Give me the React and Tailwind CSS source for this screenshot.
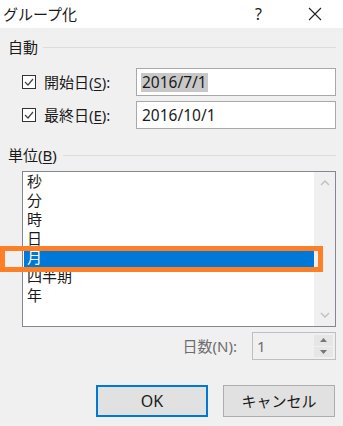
import React from "react";

const FONT = { fontFamily: '"Noto Sans", "Noto Sans CJK JP", sans-serif' };

function Check() {
  return (
    <div className="w-[14px] h-[14px] border border-[#333333] bg-white flex items-center justify-center">
      <svg width="10" height="8" viewBox="0 0 10 8">
        <path d="M1 4 L4 7 L9 1" stroke="#444" strokeWidth="1.2" fill="none" />
      </svg>
    </div>
  );
}

function GroupHeader({ children, lineLeft }) {
  return (
    <div className="h-[20px] flex items-center">
      <span className="pl-[8px] text-[15px] leading-none text-[#1a1a1a]">{children}</span>
      <div className={`${lineLeft} flex-1 mr-[7px] h-px bg-[#dcdcdc]`} />
    </div>
  );
}

const units = ["秒", "分", "時", "日", "月", "四半期", "年"];

export default function App() {
  return (
    <div className="relative w-[343px] h-[426px] overflow-hidden bg-[#f0f0f0] text-[#1a1a1a]" style={FONT}>
      {/* Title bar */}
      <div className="h-[28px] bg-white flex items-center">
        <span className="pl-[3px] text-[15px] leading-none">グループ化</span>
        <span className="ml-auto mr-[46px] text-[16px] leading-none">?</span>
        <svg width="14" height="14" viewBox="0 0 14 14" className="mr-[21px]">
          <path d="M1 1 L13 13 M13 1 L1 13" stroke="#222" strokeWidth="1.1" />
        </svg>
      </div>

      <div className="mt-[9px]">
        <GroupHeader lineLeft="ml-[5px]">自動</GroupHeader>
      </div>

      {/* Start date */}
      <div className="mt-[11px] h-[28px] flex items-center">
        <div className="ml-[22px]"><Check /></div>
        <span className="ml-[8px] w-[92px] text-[15px] leading-none">
          開始日(<span className="underline underline-offset-2">S</span>):
        </span>
        <div className="w-[200px] h-[28px] border border-[#a8a8a8] bg-white flex items-center pl-[4px]">
          <span className="bg-[#c8c8c8] text-[15.5px] leading-[19px] px-px">2016/7/1</span>
        </div>
      </div>

      {/* End date */}
      <div className="mt-[5px] h-[28px] flex items-center">
        <div className="ml-[22px]"><Check /></div>
        <span className="ml-[8px] w-[92px] text-[15px] leading-none">
          最終日(<span className="underline underline-offset-2">E</span>):
        </span>
        <div className="w-[200px] h-[28px] border border-[#a8a8a8] bg-white flex items-center pl-[5px]">
          <span className="text-[15.5px] leading-[19px]">2016/10/1</span>
        </div>
      </div>

      <div className="mt-[16px]">
        <GroupHeader lineLeft="ml-[6px]">
          単位(<span className="underline underline-offset-2">B</span>)
        </GroupHeader>
      </div>

      {/* Listbox */}
      <div className="mt-[6px] ml-[22px] w-[314px] h-[156px] border border-[#828790] bg-white flex">
        <div className="flex-1 pl-px">
          {units.map((u) => (
            <div
              key={u}
              className={`h-[19px] flex items-center pl-[3px] text-[15px] leading-none ${
                u === "月" ? "bg-[#0078d7] text-white" : ""
              }`}
            >
              {u}
            </div>
          ))}
        </div>
        <div className="w-[21px] bg-[#f0f0f0] flex flex-col items-center justify-between py-[8px]">
          <svg width="10" height="6" viewBox="0 0 10 6">
            <path d="M1 5 L5 1 L9 5" stroke="#c2c2c2" strokeWidth="1.5" fill="none" />
          </svg>
          <svg width="10" height="6" viewBox="0 0 10 6">
            <path d="M1 1 L5 5 L9 1" stroke="#c2c2c2" strokeWidth="1.5" fill="none" />
          </svg>
        </div>
      </div>

      {/* Days spin */}
      <div className="mt-[5px] h-[28px] flex items-center justify-end pr-[7px]">
        <span className="mr-[15px] text-[15px] leading-none text-[#6d6d6d]">日数(N):</span>
        <div className="w-[84px] h-[28px] border border-[#bfbfbf] bg-[#f0f0f0] flex p-[2px]">
          <div className="flex-1 flex items-center pl-[2px] text-[15px] leading-none text-[#6d6d6d]">1</div>
          <div className="w-[19px] flex flex-col gap-px">
            <div className="flex-1 bg-[#e6e6e6] flex items-center justify-center">
              <svg width="7" height="4" viewBox="0 0 7 4"><path d="M0 4 L3.5 0 L7 4 Z" fill="#777" /></svg>
            </div>
            <div className="flex-1 bg-[#e6e6e6] flex items-center justify-center">
              <svg width="7" height="4" viewBox="0 0 7 4"><path d="M0 0 L3.5 4 L7 0 Z" fill="#777" /></svg>
            </div>
          </div>
        </div>
      </div>

      {/* Buttons */}
      <div className="mt-[25px] flex justify-end gap-[15px] pr-[8px]">
        <button className="w-[112px] h-[32px] border-2 border-[#0078d7] bg-[#e1e1e1] text-[16px] leading-none">
          OK
        </button>
        <button className="w-[112px] h-[32px] border border-[#adadad] bg-[#e1e1e1] text-[15px] leading-none">
          キャンセル
        </button>
      </div>

      {/* Highlight annotation */}
      <div className="absolute left-0 top-[246px] w-[323px] h-[26px] border-[5px] border-[#ff7f27]" />
    </div>
  );
}
